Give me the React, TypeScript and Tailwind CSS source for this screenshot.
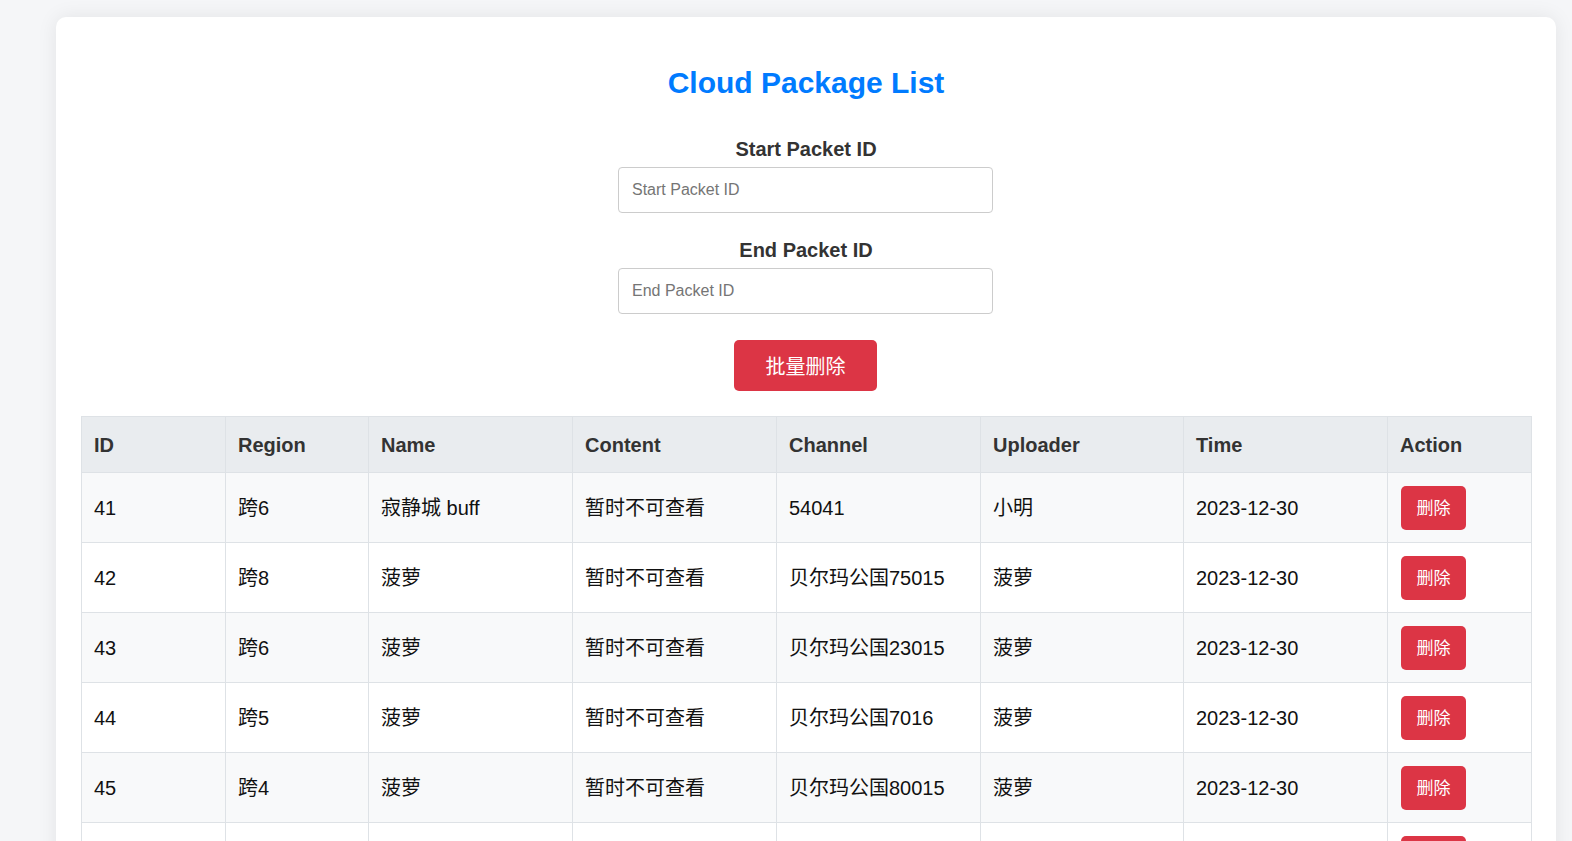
export default function App() {
  const rows = [
    ["41", "跨6", "寂静城 buff", "暂时不可查看", "54041", "小明", "2023-12-30"],
    ["42", "跨8", "菠萝", "暂时不可查看", "贝尔玛公国75015", "菠萝", "2023-12-30"],
    ["43", "跨6", "菠萝", "暂时不可查看", "贝尔玛公国23015", "菠萝", "2023-12-30"],
    ["44", "跨5", "菠萝", "暂时不可查看", "贝尔玛公国7016", "菠萝", "2023-12-30"],
    ["45", "跨4", "菠萝", "暂时不可查看", "贝尔玛公国80015", "菠萝", "2023-12-30"],
    ["46", "跨3", "菠萝", "暂时不可查看", "贝尔玛公国60015", "菠萝", "2023-12-30"],
    ["47", "跨2", "菠萝", "暂时不可查看", "贝尔玛公国50015", "菠萝", "2023-12-30"],
  ];
  const headers = ["ID", "Region", "Name", "Content", "Channel", "Uploader", "Time", "Action"];
  const widths = [144, 143, 204, 204, 204, 203, 204, 144];
  return (
    <div className="min-h-screen bg-[#f5f6f8] pl-[56px] pr-[16px] pt-[17px] font-['Liberation_Sans','Noto_Sans_CJK_SC',sans-serif]">
      <div className="bg-white rounded-[10px] shadow-[0_0_20px_rgba(0,0,0,0.08)] px-[25px] pt-[48px] pb-[25px]">
        <h1 className="text-center text-[30px] leading-[36px] font-bold text-[#007bff]">Cloud Package List</h1>
        <div className="flex flex-col items-center mt-[36px]">
          <label className="text-[20px] leading-[24px] font-bold text-[#333]">Start Packet ID</label>
          <input
            className="mt-[6px] ml-[-1px] w-[375px] h-[46px] border border-[#ccc] rounded-[4px] px-[13px] text-[16px] text-[#333] outline-none placeholder:text-[#757575]"
            placeholder="Start Packet ID"
          />
          <label className="mt-[25px] text-[20px] leading-[24px] font-bold text-[#333]">End Packet ID</label>
          <input
            className="mt-[6px] ml-[-1px] w-[375px] h-[46px] border border-[#ccc] rounded-[4px] px-[13px] text-[16px] text-[#333] outline-none placeholder:text-[#757575]"
            placeholder="End Packet ID"
          />
          <button className="mt-[26px] ml-[-1px] h-[51px] w-[143px] rounded-[5px] bg-[#dc3545] text-white text-[20px] pt-[3px] flex items-center justify-center">
            批量删除
          </button>
        </div>
        <table className="mt-[25px] w-full table-fixed border-collapse text-[20px]">
          <colgroup>
            {widths.map((w, i) => (
              <col key={i} style={{ width: `${w}px` }} />
            ))}
          </colgroup>
          <thead>
            <tr className="bg-[#e9ecef]">
              {headers.map((h) => (
                <th key={h} className="h-[56px] border border-[#dee2e6] px-[12px] text-left font-bold text-[#333]">
                  {h}
                </th>
              ))}
            </tr>
          </thead>
          <tbody>
            {rows.map((r, i) => (
              <tr key={r[0]} className={i % 2 === 0 ? "bg-[#f8f9fa]" : "bg-white"}>
                {r.map((c, j) => (
                  <td key={j} className="h-[70px] border border-[#dee2e6] px-[12px] text-[#111] align-middle">
                    {c}
                  </td>
                ))}
                <td className="h-[70px] border border-[#dee2e6] px-[12px] align-middle">
                  <button className="ml-[1px] mt-[1px] h-[44px] w-[65px] rounded-[5px] bg-[#dc3545] text-white text-[17px] pt-[2px] flex items-center justify-center">
                    删除
                  </button>
                </td>
              </tr>
            ))}
          </tbody>
        </table>
      </div>
    </div>
  );
}
